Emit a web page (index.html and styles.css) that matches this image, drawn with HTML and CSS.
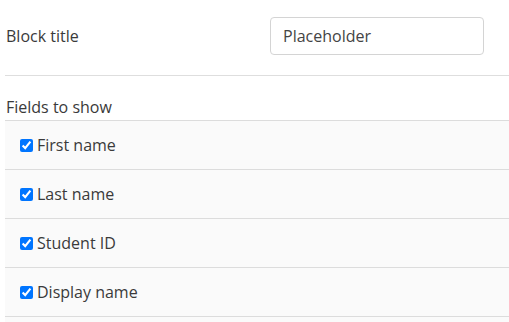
FILE: index.html
```html
<!DOCTYPE html>
<html lang="en">
<head>
  <meta charset="UTF-8">
  <meta name="viewport" content="width=device-width, initial-scale=1.0">
  <title>Block settings</title>
  <link rel="stylesheet" href="styles.css">
</head>
<body>
  <div class="settings">
    <div class="title-row">
      <label class="title-label" for="blocktitle">Block title</label>
      <input class="title-input" id="blocktitle" type="text" placeholder="Placeholder">
    </div>
    <div class="fields-label">Fields to show</div>
    <ul class="fields">
      <li><label><input type="checkbox" checked> First name</label></li>
      <li><label><input type="checkbox" checked> Last name</label></li>
      <li><label><input type="checkbox" checked> Student ID</label></li>
      <li><label><input type="checkbox" checked> Display name</label></li>
      <li class="rest"></li>
    </ul>
  </div>
</body>
</html>
```

FILE: styles.css
```css
body { margin: 0; font-family: 'Open Sans', 'Liberation Sans', sans-serif; font-size: 16px; color: #3a3a3a; background: #fff; }
.settings { padding-left: 5px; }
.title-row { display: grid; grid-template-columns: 265px 214px; align-items: center; padding: 17px 0 20px; border-bottom: 1px solid #dedede; }
.title-label { padding-left: 1px; }
.title-input { box-sizing: border-box; height: 38px; width: 214px; padding: 0 12px; border: 1px solid #d4d4d4; border-radius: 4px; font: inherit; color: #444; }
.title-input::placeholder { color: #444; opacity: 1; }
.fields-label { line-height: 22px; margin-top: 20px; margin-bottom: 2px; padding-left: 1px; }
.fields { list-style: none; margin: 0; padding: 0; }
.fields li { display: flex; align-items: center; height: 48px; border-top: 1px solid #dcdcdc; background: #fafafa; padding-left: 15px; }
.fields li.rest { height: 6px; }
.fields label { display: flex; align-items: center; }
.fields input { width: 13px; height: 13px; margin: 0 4px 0 0; }
```
